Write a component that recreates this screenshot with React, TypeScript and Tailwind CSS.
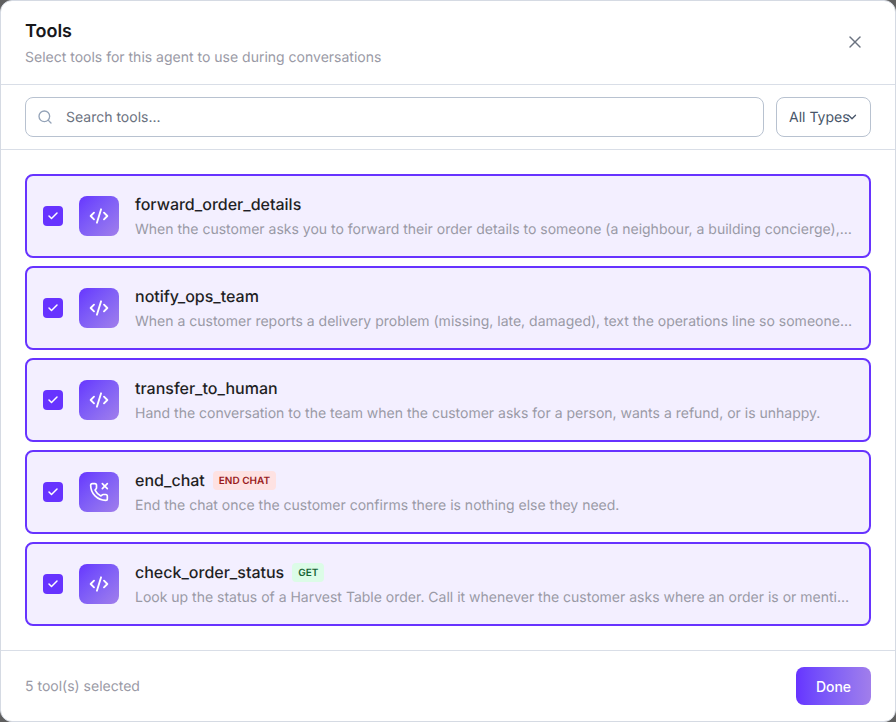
import { Check, ChevronDown, CodeXml, PhoneMissed, Search, X } from "lucide-react";

type Tool = {
  name: string;
  desc: string;
  phone?: boolean;
  badge?: string;
  badgeClass?: string;
};

const tools: Tool[] = [
  {
    name: "forward_order_details",
    desc: "When the customer asks you to forward their order details to someone (a neighbour, a building concierge), text the details to that number.",
  },
  {
    name: "notify_ops_team",
    desc: "When a customer reports a delivery problem (missing, late, damaged), text the operations line so someone can follow up with them today.",
  },
  {
    name: "transfer_to_human",
    desc: "Hand the conversation to the team when the customer asks for a person, wants a refund, or is unhappy.",
  },
  {
    name: "end_chat",
    desc: "End the chat once the customer confirms there is nothing else they need.",
    phone: true,
    badge: "END CHAT",
    badgeClass: "bg-[#fee2e2] text-[#991b1b]",
  },
  {
    name: "check_order_status",
    desc: "Look up the status of a Harvest Table order. Call it whenever the customer asks where an order is or mentions a delivery date or tracking.",
    badge: "GET",
    badgeClass: "bg-[#dcfce7] text-[#166534]",
  },
];

function ToolRow({ tool }: { tool: Tool }) {
  return (
    <div className="flex h-[84px] items-center gap-4 rounded-[8px] border-2 border-[#6733ff] bg-[#f3efff] pl-4 pr-4">
      <div className="flex h-5 w-5 shrink-0 items-center justify-center rounded-[4px] bg-[#6733ff]">
        <Check size={12} strokeWidth={3} className="text-white" />
      </div>
      <div className="flex h-10 w-10 shrink-0 items-center justify-center rounded-[8px] bg-gradient-to-br from-[#6733ff] to-[#a17eeb] text-white">
        {tool.phone ? <PhoneMissed size={20} strokeWidth={2} /> : <CodeXml size={20} strokeWidth={2.25} />}
      </div>
      <div className="min-w-0 flex-1 pb-[1px]">
        <div className="flex h-6 items-center gap-2">
          <span className="text-base leading-6 font-medium text-[#1f1f24]">{tool.name}</span>
          {tool.badge && (
            <span className={`mt-[2px] rounded-[4px] px-[6px] pt-[3px] pb-[1px] text-[10px] leading-[15px] font-semibold ${tool.badgeClass}`}>
              {tool.badge}
            </span>
          )}
        </div>
        <p className="mt-[4px] truncate text-sm leading-5 text-[#9a9aa6]">{tool.desc}</p>
      </div>
    </div>
  );
}

export default function App() {
  return (
    <div className="h-[722px] w-[896px] bg-[#5f5f5f] font-['Inter',sans-serif] [text-rendering:geometricPrecision]">
      <div className="flex h-full w-full flex-col overflow-hidden rounded-[12px] border border-[#d5dae3] bg-white">
        <header className="flex h-[84px] shrink-0 items-start justify-between border-b border-[#d9dee7] pl-6 pr-[30px]">
          <div className="pt-[19px]">
            <h2 className="text-lg leading-6 font-semibold text-[#18181b]">Tools</h2>
            <p className="mt-[4px] text-sm leading-5 text-[#9a9aa6]">Select tools for this agent to use during conversations</p>
          </div>
          <button className="mt-[31px] text-[#6b7280]">
            <X size={20} strokeWidth={1.75} />
          </button>
        </header>

        <div className="flex h-[65px] shrink-0 items-center gap-3 border-b border-[#d9dee7] px-6">
          <div className="flex h-10 flex-1 items-center gap-[13px] rounded-[8px] border border-[#b8c2d0] pl-[11px]">
            <Search size={16} strokeWidth={2} className="text-[#94a3b8]" />
            <span className="mt-[2px] text-sm text-[#6b7280]">Search tools...</span>
          </div>
          <div className="relative flex h-10 w-[95px] items-center rounded-[8px] border border-[#b8c2d0] pl-3">
            <span className="mt-[2px] text-sm text-[#475569]">All Types</span>
            <ChevronDown size={14} strokeWidth={2.25} className="absolute right-[11px] top-[12px] text-[#475569]" />
          </div>
        </div>

        <div className="flex flex-1 flex-col gap-2 px-6 pt-6">
          {tools.map((t) => (
            <ToolRow key={t.name} tool={t} />
          ))}
        </div>

        <footer className="flex h-[71px] shrink-0 items-center justify-between border-t border-[#d9dee7] px-6">
          <span className="mt-[2px] text-sm text-[#9a9aa6]">5 tool(s) selected</span>
          <button className="h-[38px] w-[75px] rounded-[8px] bg-gradient-to-r from-[#6733ff] to-[#a17eeb] pt-[2px] text-sm font-medium text-white">
            Done
          </button>
        </footer>
      </div>
    </div>
  );
}
